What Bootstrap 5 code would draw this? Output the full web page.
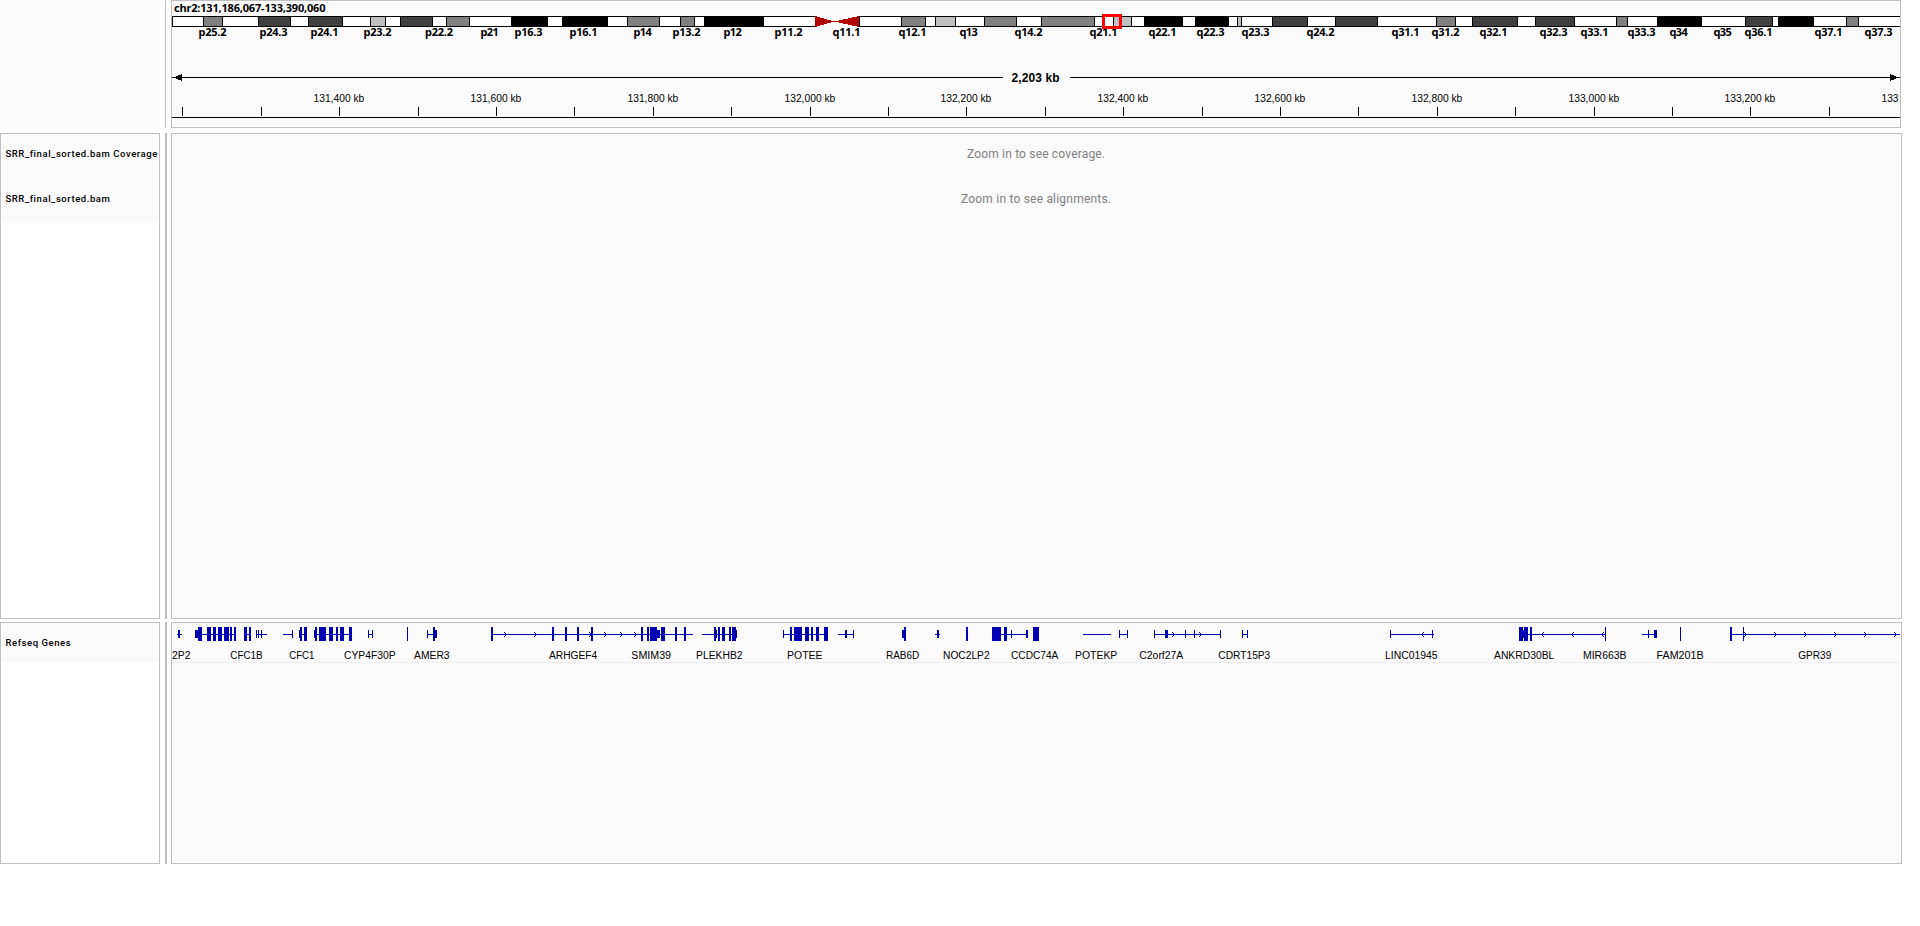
<!DOCTYPE html>
<html lang="en">
<head>
<meta charset="utf-8">
<title>Genome viewer</title>
<link rel="stylesheet" href="https://cdn.jsdelivr.net/npm/bootstrap@5.3.0/dist/css/bootstrap.min.css">
<style>
  :root { --line: #bfbfbf; --pane: #fafafa; }
  body { background: #fff; font-family: "Liberation Sans", sans-serif; }
  .viewer { width: 1902px; row-gap: 5px; }
  .names { width: 160px; }
  .names.framed { border: 1px solid var(--line); }
  .pane { background: var(--pane); }
  .handle { width: 2px; margin-left: 5px; margin-right: 4px; background: var(--line); }
  .handle.thin { width: 1px; margin-right: 5px; }
  .plot { border: 1px solid var(--line); background: var(--pane); }
  .row-head { height: 128px; }
  .row-data { height: 486px; }
  .row-genes { height: 242px; margin-top: -2px; }
  .head-plot { width: 1730px; }
  .wide-plot { width: 1731px; }
  .track-name { font: 500 9.5px/12px Roboto, sans-serif; letter-spacing: .56px; color: #000; padding-left: 4.5px; white-space: nowrap; }
  .h-cov { height: 40px; } .h-aln { height: 49px; } .h-gene { height: 39px; }
  svg { shape-rendering: crispEdges; }
  svg text { fill: #000; }
  .band-name { font: 700 11px "Noto Sans", sans-serif; }
  .locus { font: 700 11px "Noto Sans", sans-serif; }
  .span-name { font: 700 12px "Liberation Sans", sans-serif; }
  .tick-name, .gene-name { font: 10px "Liberation Sans", sans-serif; }
  svg text.hint { font: 12px Roboto, sans-serif; fill: #808080; }
</style>
</head>
<body>
<main class="viewer d-flex flex-column overflow-hidden">
  <section class="row-head d-flex">
    <div class="names pane flex-shrink-0"></div>
    <div class="handle thin flex-shrink-0"></div>
    <div class="plot head-plot flex-shrink-0 overflow-hidden">
      <svg id="ruler" class="d-block" width="1728" height="126" viewBox="172 1 1728 126"></svg>
    </div>
  </section>
  <section class="row-data d-flex">
    <div class="names framed flex-shrink-0 overflow-hidden">
      <div class="track-name pane h-cov d-flex align-items-center">SRR_final_sorted.bam Coverage</div>
      <div class="track-name pane h-aln d-flex align-items-center">SRR_final_sorted.bam</div>
    </div>
    <div class="handle flex-shrink-0"></div>
    <div class="plot wide-plot flex-shrink-0 overflow-hidden">
      <svg id="reads" class="d-block" width="1729" height="484" viewBox="172 134 1729 484"></svg>
    </div>
  </section>
  <section class="row-genes d-flex">
    <div class="names framed flex-shrink-0 overflow-hidden">
      <div class="track-name pane h-gene d-flex align-items-center">Refseq Genes</div>
    </div>
    <div class="handle flex-shrink-0"></div>
    <div class="plot wide-plot flex-shrink-0 overflow-hidden">
      <svg id="genes" class="d-block" width="1729" height="240" viewBox="172 623 1729 240"></svg>
    </div>
  </section>
</main>
<script src="https://cdn.jsdelivr.net/npm/bootstrap@5.3.0/dist/js/bootstrap.bundle.min.js"></script>
<script>
const rect = (x, y, w, h, fill) => `<rect x="${x}" y="${y}" width="${w}" height="${h}" fill="${fill}"/>`;
const label = (cls, x0, x1, y, s) => `<text class="${cls}" x="${x0}" y="${y}" textLength="${(x1 - x0).toFixed(1)}" lengthAdjust="${/tick|gene/.test(cls) ? 'spacingAndGlyphs' : 'spacing'}">${s}</text>`;

// Cytobands: first and last border pixel, stain
const D = '#404040', G = '#808080', L = '#c0c0c0', K = '#000';
const bands = [[203,222,G],[258,290,D],[308,342,D],[370,385,L],[400,432,D],[446,469,G],[511,547,K],[562,607,K],
  [627,659,G],[680,694,G],[704,763,K],[901,925,G],[935,955,L],[984,1016,G],[1041,1094,G],[1113,1131,L],
  [1144,1182,K],[1195,1228,K],[1237,1241,L],[1272,1307,D],[1335,1377,D],[1436,1455,G],[1472,1517,D],
  [1535,1574,D],[1616,1627,G],[1657,1701,K],[1745,1772,D],[1778,1813,K],[1846,1858,G]];
const names = [['p25.2',198.5],['p24.3',259.5],['p24.1',310.5],['p23.2',363.5],['p22.2',425],['p21',480.5],['p16.3',514.5],
  ['p16.1',569.5],['p14',633.5],['p13.2',672.5],['p12',723.5],['p11.2',774.5],['q11.1',832.5],['q12.1',898.5],['q13',959.5],
  ['q14.2',1014.5],['q21.1',1089.5],['q22.1',1148.5],['q22.3',1196.5],['q23.3',1241.5],['q24.2',1306.5],['q31.1',1391.5],
  ['q31.2',1431.5],['q32.1',1479.5],['q32.3',1539.5],['q33.1',1580.5],['q33.3',1627.5],['q34',1669.5],['q35',1713.5],
  ['q36.1',1744.5],['q37.1',1814.5],['q37.3',1864.5]];
let s = label('locus', 174, 325.5, 12, 'chr2:131,186,067-133,390,060');
s += rect(172, 16, 1729, 11, K) + rect(173, 17, 1728, 9, '#fff');
for (const [a, b, c] of bands) s += rect(a, 16, b - a + 1, 11, K) + rect(a + 1, 17, b - a - 1, 9, c);
s += rect(815, 16, 44, 11, '#fafafa') + rect(859, 16, 1, 11, K);
s += '<path d="M815 16L834 21.5L815 27ZM859 16L834 21.5L859 27Z" fill="#b40000"/>';
for (const [n, x] of names) s += label('band-name', x, x + (n.length > 3 ? 28 : 18.3), 36, n);
s += '<rect x="1103.5" y="15.5" width="17" height="12" fill="none" stroke="red" stroke-width="3"/>';

s += rect(172, 77, 831, 1, K) + rect(1070, 77, 830, 1, K);
s += '<path d="M173 77.5L182 74V81ZM1899 77.5L1890 74V81Z"/>';
s += label('span-name', 1011.5, 1059.5, 82, '2,203 kb');
s += rect(172, 117, 1728, 1, K);
const ticks = [182,261,339,418,496,574,653,731,810,888,966,1045,1123,1202,1280,1358,1437,1515,1594,1672,1750,1829];
ticks.forEach((x, i) => {
  s += rect(x, 107, 1, 9, K);
  if (i && i % 2 === 0) {
    const kb = (131200 + i * 100).toString();
    s += label('tick-name', x - 25.5, x + 25.3, 102, kb.slice(0, 3) + ',' + kb.slice(3) + ' kb');
  }
});
s += label('tick-name', 1881.5, 1898.5, 102, '133');
document.getElementById('ruler').innerHTML = s;

document.getElementById('reads').innerHTML =
  label('hint', 967, 1105, 158, 'Zoom in to see coverage.') + label('hint', 961, 1111, 203, 'Zoom in to see alignments.');

// Gene models: intron span, tall exons, short exons, strand marks
const B = '#0000b2';
const genes = [
  [[177,182],[],[[178,2]]],
  [[195,236],[[198,4],[207,4],[213,3],[218,4],[224,5],[230,2],[234,2]],[[195,3]]],
  [[244,251],[[244,3],[249,2]],[]],
  [[256,267],[],[[256,1],[258,1],[261,1]]],
  [[283,293],[],[[292,1]]],
  [[299,307],[[300,2],[304,3]],[[299,1]]],
  [[314,352],[[315,2],[319,7],[329,4],[336,2],[340,4],[349,3]],[[314,1]]],
  [[368,373],[],[[368,1],[372,1]]],
  [[407,408],[[407,1]],[]],
  [[427,437],[[433,2]],[[427,1],[435,2]]],
  [[491,693],[[491,2],[552,2],[565,2],[577,2],[591,2],[641,2],[647,2],[650,7],[661,4],[675,2],[684,2]],[[657,3]],[505,535,590,605,621,635]],
  [[702,737],[[714,2],[718,2],[722,3],[729,2],[732,4]],[[716,1],[736,1]]],
  [[783,828],[[790,2],[794,8],[805,4],[811,2],[816,3],[824,4]],[[783,1]]],
  [[838,854],[],[[845,2],[853,1]]],
  [[902,906],[[904,2]],[[902,2]]],
  [[935,940],[],[[937,2]]],
  [[966,968],[[966,2]],[]],
  [[992,1028],[[992,9],[1004,3]],[[1011,1],[1026,2]]],
  [[1033,1039],[[1033,6]],[]],
  [[1083,1111],[],[]],
  [[1119,1128],[],[[1119,1],[1127,1]]],
  [[1154,1221],[],[[1154,1],[1165,3],[1185,1],[1194,1],[1220,1]],[1173,1200]],
  [[1242,1248],[],[[1242,1],[1247,1]]],
  [[1390,1434],[],[[1390,1],[1432,1]],[-1422]],
  [[1519,1606],[[1519,4],[1524,4],[1530,2],[1605,1]],[[1523,1]],[-1542,-1572,-1602]],
  [[1642,1657],[],[[1648,1],[1654,3]]],
  [[1680,1681],[[1680,1]],[]],
  [[1730,1900],[[1730,2],[1743,1]],[],[1745,1775,1805,1835,1865,1895]]];
let g = rect(172, 662, 1728, 1, '#eee');
for (const [[a, b], tall, short, marks = []] of genes) {
  g += rect(a, 634, b - a, 1, B);
  for (const [x, w] of tall) g += rect(x, 627, w, 14, B);
  for (const [x, w] of short) g += rect(x, 630, w, 8, B);
  for (const m of marks) {
    const x = Math.abs(m), d = m > 0 ? -1 : 1;
    g += rect(x, 633, 1, 3, B) + rect(x + d, 632, 1, 1, B) + rect(x + d, 636, 1, 1, B);
  }
}
[['2P2',172,190.5],['CFC1B',230.3,262.6],['CFC1',289.3,314.3],['CYP4F30P',344,395.6],['AMER3',414,449.6],
 ['ARHGEF4',549,597.3],['SMIM39',631.3,671],['PLEKHB2',696,742.6],['POTEE',787,822.6],['RAB6D',886,919.3],
 ['NOC2LP2',943,989.6],['CCDC74A',1011,1058.3],['POTEKP',1075,1117.3],['C2orf27A',1139.3,1183.3],['CDRT15P3',1218.3,1270.3],
 ['LINC01945',1385,1437.6],['ANKRD30BL',1494,1554.3],['MIR663B',1583,1626.6],['FAM201B',1656.6,1703.6],['GPR39',1798.3,1831.3]]
 .forEach(([n, a, b]) => g += label('gene-name', a, b, 659, n));
document.getElementById('genes').innerHTML = g;
</script>
</body>
</html>
